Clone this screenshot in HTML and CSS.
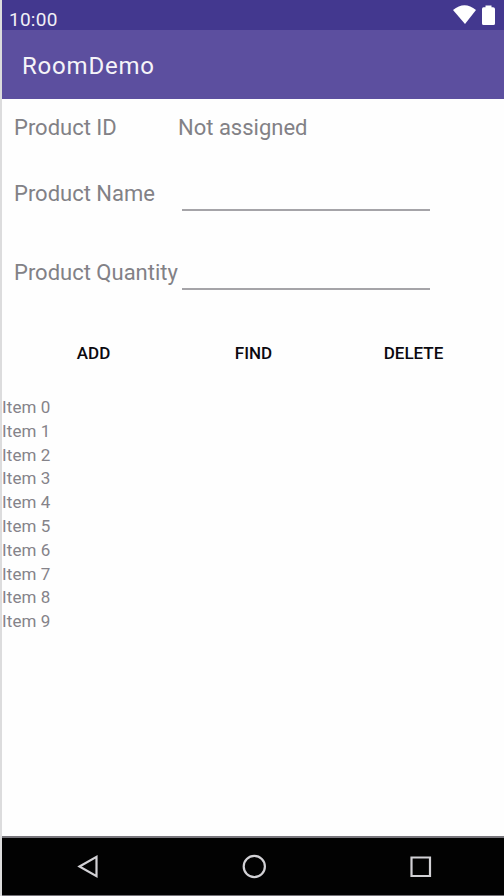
FILE: index.html
```html
<!DOCTYPE html>
<html lang="en">
<head>
<meta charset="utf-8">
<title>RoomDemo</title>
<link rel="stylesheet" href="styles.css">
</head>
<body>
<div class="screen">
  <header class="status">
    <span class="clock">10:00</span>
    <svg class="status-icons" width="43" height="21" viewBox="0 0 43 21" fill="#fff">
      <path d="M0 5Q11.500-4.500 23 5L12 19Z"/>
      <path d="M29 4Q29 2.300 30.500 2.300H32.500V0.500H38.500V2.300H40Q42 2.500 42 4V18.500Q42 20 40.500 20H30.500Q29 20 29 18.500Z"/>
    </svg>
  </header>
  <div class="appbar"><h1 class="title">RoomDemo</h1></div>
  <main class="content">
    <div class="row row-id"><span class="label">Product ID</span><span class="label">Not assigned</span></div>
    <div class="row row-name"><label class="label" for="name">Product Name</label><input class="field" id="name"></div>
    <div class="row row-qty"><label class="label" for="qty">Product Quantity</label><input class="field" id="qty"></div>
    <div class="buttons">
      <button class="button">ADD</button>
      <button class="button">FIND</button>
      <button class="button">DELETE</button>
    </div>
    <ul class="list">
      <li>Item 0</li><li>Item 1</li><li>Item 2</li><li>Item 3</li><li>Item 4</li>
      <li>Item 5</li><li>Item 6</li><li>Item 7</li><li>Item 8</li><li>Item 9</li>
    </ul>
  </main>
  <nav class="nav">
    <svg width="24" height="26" viewBox="0 0 24 26"><path d="M3.500 12.500L20.500 2.800V22.200Z"/></svg>
    <svg width="26" height="26" viewBox="0 0 26 26"><circle cx="13.300" cy="12.500" r="10.600"/></svg>
    <svg width="24" height="26" viewBox="0 0 24 26"><path d="M3.500 3.500H22V22H3.500Z"/></svg>
  </nav>
</div>
</body>
</html>
```
FILE: styles.css
```css
* { box-sizing: border-box; }
body { margin: 0; font-family: Roboto, sans-serif; background: #fefefe; }
.screen {
  width: 504px;
  height: 896px;
  border-left: 2px solid #dcdcdd;
  display: flex;
  flex-direction: column;
  overflow: hidden;
}
.status {
  height: 30px;
  flex: none;
  background: #43388f;
  display: flex;
  justify-content: space-between;
  padding: 5px 8px 0 7px;
}
.clock { color: #f1f0f6; font-size: 19px; line-height: 29px; letter-spacing: 0.25px; }
.appbar {
  height: 69px;
  flex: none;
  background: #5c4f9f;
  padding: 2px 0 0 20px;
  display: flex;
  align-items: center;
}
.title { margin: 0; color: #f5f4f8; font-size: 24px; font-weight: 400; line-height: 32px; letter-spacing: 0.8px; }
.content { flex: 1; }
.row { display: grid; grid-template-columns: 164px 256px; padding-left: 12px; }
.row-id { height: 61px; padding-top: 14px; }
.row-name { height: 79px; padding-top: 19px; }
.row-qty { height: 78px; padding-top: 19px; }
.label { color: #828186; font-size: 22px; line-height: 29px; white-space: nowrap; }
.field {
  width: 248px;
  height: 32px;
  margin: 0 4px;
  padding: 0;
  border: 0;
  border-bottom: 2px solid #a5a4a8;
  background: transparent;
  outline: 0;
}
.buttons { display: grid; grid-template-columns: 160px 160px 160px; height: 79px; padding: 23px 0 0 11.5px; }
.button {
  height: 26px;
  border: 0;
  padding: 0;
  background: transparent;
  color: #0b090f;
  font: 500 17px/26px Roboto, sans-serif;
}
.list { list-style: none; margin: 0; padding: 0; color: #858389; font-size: 17px; line-height: 23.8px; letter-spacing: 0.1px; }
.nav {
  height: 60px;
  flex: none;
  background: #020202;
  border-top: 2px solid #77757b;
  border-bottom: 1px solid #737177;
  display: flex;
  justify-content: space-between;
  align-items: center;
  padding: 0 72px 0 74px;
}
.nav svg { fill: none; stroke: #d2d1d5; stroke-width: 2.200; }
```
